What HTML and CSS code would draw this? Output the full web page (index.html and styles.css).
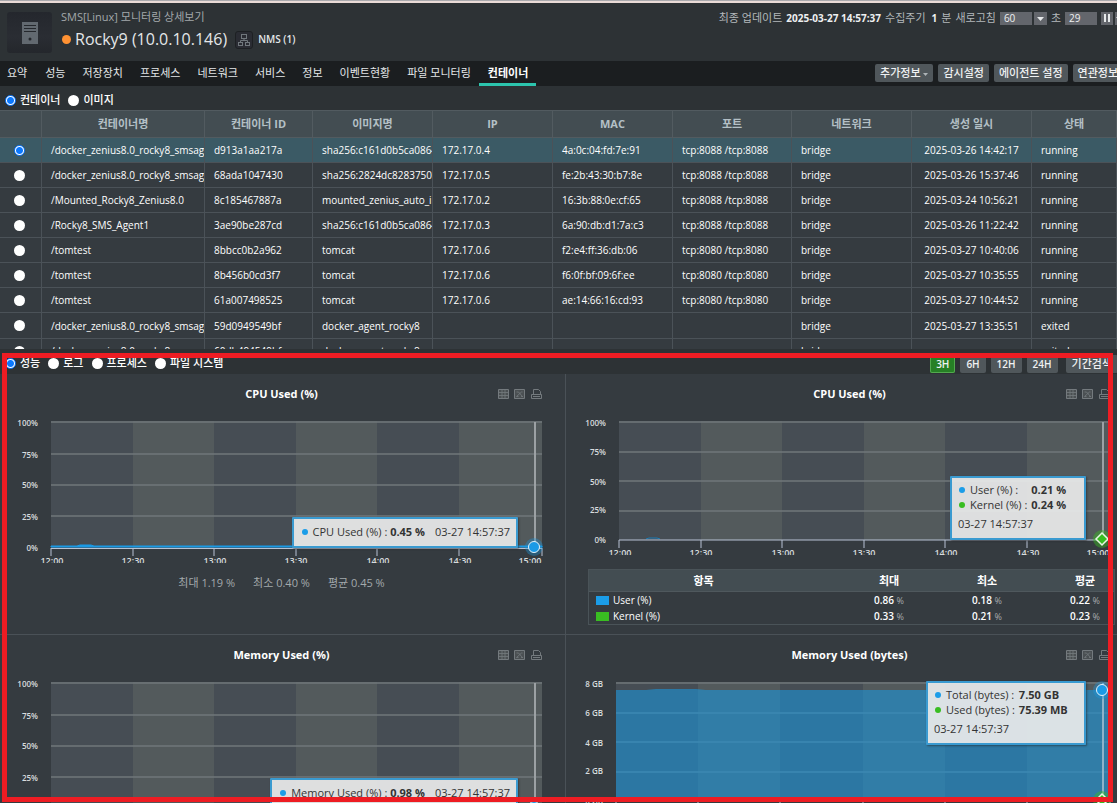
FILE: index.html
```html
<!DOCTYPE html>
<html lang="ko">
<head>
<meta charset="utf-8">
<title>SMS 모니터링 상세보기</title>
<link rel="stylesheet" href="styles.css">
</head>
<body>
<header class="top">
  <div class="device" aria-hidden="true">
    <svg width="18" height="24" viewBox="0 0 18 24"><rect x="1" y="1" width="16" height="22" fill="#626970"/><path d="M3 4.500h12M3 7.500h12M3 10.500h12" stroke="#25282d" stroke-width="1"/><circle cx="9" cy="18" r="1.500" fill="#25282d"/></svg>
  </div>
  <div class="ident">
    <p class="crumb">SMS[Linux] 모니터링 상세보기</p>
    <div class="host">
      <span class="status"></span>
      <h1>Rocky9 (10.0.10.146)</h1>
      <span class="nms-icon" aria-hidden="true"><svg width="12" height="12" viewBox="0 0 12 12" fill="none" stroke="#70777c"><rect x="3.500" y=".5" width="5" height="4"/><rect x=".5" y="8.500" width="4" height="3"/><rect x="7.500" y="8.500" width="4" height="3"/><path d="M6 4.500v2M2.500 8V6.500h7V8"/></svg></span>
      <a class="nms" href="#nms">NMS (1)</a>
    </div>
  </div>
  <div class="refresh">
    <span>최종 업데이트</span><b>2025-03-27 14:57:37</b><span>수집주기</span><b class="cycle">1</b><span>분</span>
    <label for="cycle">새로고침</label>
    <span class="select"><select id="cycle"><option>60</option></select><svg width="7" height="4" viewBox="0 0 7 4"><path d="M0 0h7L3.500 4z" fill="#e6e9ea"/></svg></span>
    <label for="left">초</label><input id="left" type="text" value="29">
    <button class="mini" aria-label="일시정지"><svg width="8" height="8" viewBox="0 0 8 8"><path d="M1 0h2v8H1zM5 0h2v8H5z" fill="#e6e9ea"/></svg></button>
    <button class="mini" aria-label="새로고침"><svg width="10" height="8" viewBox="0 0 10 8"><path d="M9 2A4 4 0 0 0 2 3H0l3 4 3-4H4a2 2 0 0 1 4 0z" fill="#e6e9ea"/></svg></button>
  </div>
</header>
<nav class="nav">
  <div class="tabs"><a href="#1">요약</a><a href="#2">성능</a><a href="#3">저장장치</a><a href="#4">프로세스</a><a href="#5">네트워크</a><a href="#6">서비스</a><a href="#7">정보</a><a href="#8">이벤트현황</a><a href="#9">파일 모니터링</a><a class="active" href="#10">컨테이너</a></div>
  <div class="actions"><button>추가정보 <svg width="5" height="3" viewBox="0 0 5 3"><path d="M0 0h5L2.500 3z" fill="#aeb4b7"/></svg></button><button>감시설정</button><button>에이전트 설정</button><button>연관정보</button></div>
</nav>
<div class="radios">
  <label><input type="radio" name="kind" checked>컨테이너</label>
  <label><input type="radio" name="kind">이미지</label>
</div>
<div class="list">
<table>
  <colgroup><col class="c-pick"><col class="c-name"><col class="c-id"><col class="c"><col class="c"><col class="c"><col class="c-port"><col class="c"><col class="c"><col></colgroup>
  <thead><tr><th></th><th>컨테이너명</th><th>컨테이너 ID</th><th>이미지명</th><th>IP</th><th>MAC</th><th>포트</th><th>네트워크</th><th>생성 일시</th><th>상태</th></tr></thead>
  <tbody>
  <tr class="on"><td><input type="radio" name="row" aria-label="선택" checked></td><td>/docker_zenius8.0_rocky8_smsagen</td><td>d913a1aa217a</td><td>sha256:c161d0b5ca0864</td><td>172.17.0.4</td><td>4a:0c:04:fd:7e:91</td><td>tcp:8088 /tcp:8088</td><td>bridge</td><td class="date">2025-03-26 14:42:17</td><td>running</td></tr>
  <tr><td><input type="radio" name="row" aria-label="선택"></td><td>/docker_zenius8.0_rocky8_smsagen</td><td>68ada1047430</td><td>sha256:2824dc82837506</td><td>172.17.0.5</td><td>fe:2b:43:30:b7:8e</td><td>tcp:8088 /tcp:8088</td><td>bridge</td><td class="date">2025-03-26 15:37:46</td><td>running</td></tr>
  <tr><td><input type="radio" name="row" aria-label="선택"></td><td>/Mounted_Rocky8_Zenius8.0</td><td>8c185467887a</td><td>mounted_zenius_auto_in</td><td>172.17.0.2</td><td>16:3b:88:0e:cf:65</td><td>tcp:8088 /tcp:8088</td><td>bridge</td><td class="date">2025-03-24 10:56:21</td><td>running</td></tr>
  <tr><td><input type="radio" name="row" aria-label="선택"></td><td>/Rocky8_SMS_Agent1</td><td>3ae90be287cd</td><td>sha256:c161d0b5ca0864</td><td>172.17.0.3</td><td>6a:90:db:d1:7a:c3</td><td>tcp:8088 /tcp:8088</td><td>bridge</td><td class="date">2025-03-26 11:22:42</td><td>running</td></tr>
  <tr><td><input type="radio" name="row" aria-label="선택"></td><td>/tomtest</td><td>8bbcc0b2a962</td><td>tomcat</td><td>172.17.0.6</td><td>f2:e4:ff:36:db:06</td><td>tcp:8080 /tcp:8080</td><td>bridge</td><td class="date">2025-03-27 10:40:06</td><td>running</td></tr>
  <tr><td><input type="radio" name="row" aria-label="선택"></td><td>/tomtest</td><td>8b456b0cd3f7</td><td>tomcat</td><td>172.17.0.6</td><td>f6:0f:bf:09:6f:ee</td><td>tcp:8080 /tcp:8080</td><td>bridge</td><td class="date">2025-03-27 10:35:55</td><td>running</td></tr>
  <tr><td><input type="radio" name="row" aria-label="선택"></td><td>/tomtest</td><td>61a007498525</td><td>tomcat</td><td>172.17.0.6</td><td>ae:14:66:16:cd:93</td><td>tcp:8080 /tcp:8080</td><td>bridge</td><td class="date">2025-03-27 10:44:52</td><td>running</td></tr>
  <tr><td><input type="radio" name="row" aria-label="선택"></td><td>/docker_zenius8.0_rocky8_smsagen</td><td>59d0949549bf</td><td>docker_agent_rocky8</td><td></td><td></td><td></td><td>bridge</td><td class="date">2025-03-27 13:35:51</td><td>exited</td></tr>
  <tr><td><input type="radio" name="row" aria-label="선택"></td><td>/docker_zenius8.0_rocky8_smsagen</td><td>60db494549bf</td><td>docker_agent_rocky8</td><td></td><td></td><td></td><td>bridge</td><td></td><td>exited</td></tr>
  </tbody>
</table>
</div>
<div class="detail-bar">
  <div class="radios">
    <label><input type="radio" name="view" checked>성능</label><label><input type="radio" name="view">로그</label><label><input type="radio" name="view">프로세스</label><label><input type="radio" name="view">파일 시스템</label>
  </div>
  <div class="period"><button class="on">3H</button><button>6H</button><button>12H</button><button>24H</button><button class="range">기간검색</button></div>
</div>
<svg width="0" height="0" class="defs">
  <symbol id="tools" viewBox="0 0 46 11"><path d="M1 1h10v9H1zM17 1h10v9H17z" fill="#4b5053"/><g fill="none" stroke="#747a7e"><path d="M1.500 .5h10v9h-10zM17.500 .5h10v9h-10z"/><path d="M2 3.500h9M2 6.500h9M5 1v8M8 1v8M19.500 3h2l4 4.500M25.500 3h-1l-5 4.500h2M24 7.500h2" opacity=".8"/><path d="M36.500 5V.5h5l2 2V5M34.500 9.500v-4h10v4zM36 7.500h7"/></g></symbol>
</svg>
<main class="charts">
  <section class="panel">
    <h2>CPU Used (%)</h2><svg class="tools" width="46" height="11"><use href="#tools"/></svg>
    <svg class="plot" viewBox="-2 0 567 150">
      <rect x="51" y="7" width="491" height="127" fill="#464d54"/><path d="M133 7h81v127h-81zM296 7h81v127h-81zM459 7h83v127h-83z" fill="#535a5c"/>
      <path d="M51 8h491M51 40h491M51 71h491M51 102h491" stroke="#70777a" stroke-width="1.500"/>
      <path d="M51 133v-1h26l3-1h11l3 1h448v1z" stroke="#1b9ae6" fill="#1b9ae6"/>
      <path d="M51 134.500h491M51 134v8M133 134v8M214 134v8M296 134v8M377 134v8M459 134v8M542 134v8" stroke="#b8c2d4" fill="none"/>
      <path d="M535 8v125" stroke="#9ca1a4" stroke-width="2"/>
      <g class="y"><text x="38" y="12">100%</text><text x="38" y="44">75%</text><text x="38" y="74">50%</text><text x="38" y="106">25%</text><text x="38" y="137">0%</text></g>
      <svg x="0" y="134" width="566" height="15"><g class="x"><text x="52" y="16">12:00</text><text x="133" y="16">12:30</text><text x="215" y="16">13:00</text><text x="296" y="16">13:30</text><text x="378" y="16">14:00</text><text x="460" y="16">14:30</text><text x="530" y="16">15:00</text></g></svg>
      <circle cx="534" cy="133" r="9" fill="#1b9ae6" opacity=".35"/><circle cx="534" cy="133" r="5.500" fill="#1b9ae6" stroke="#e5f2fa"/>
    </svg>
    <p class="stats"><span>최대 1.19 %</span><span>최소 0.40 %</span><span>평균 0.45 %</span></p>
    <div class="tip tip-line"><i></i>CPU Used (%) : <b>0.45 %</b><time>03-27 14:57:37</time></div>
  </section>
  <section class="panel">
    <h2>CPU Used (%)</h2><svg class="tools" width="46" height="11"><use href="#tools"/></svg>
    <svg class="plot" viewBox="0 0 567 150">
      <rect x="53" y="7" width="491" height="119" fill="#464d54"/><path d="M135 7h81v119h-81zM298 7h81v119h-81zM461 7h83v119h-83z" fill="#535a5c"/>
      <path d="M53 8h491M53 38h491M53 67h491M53 97h491" stroke="#70777a" stroke-width="1.500"/>
      <path d="M80 125l3-1h8l3 1" stroke="#1b7db8" stroke-width="1" fill="none"/>
      <path d="M53 126h491M53 126v8M135 126v8M216 126v8M298 126v8M379 126v8M461 126v8M544 126v8" stroke="#b8c2d4" fill="none"/>
      <path d="M537 8v117" stroke="#9ca1a4" stroke-width="2"/>
      <g class="y"><text x="40" y="12">100%</text><text x="40" y="41">75%</text><text x="40" y="71">50%</text><text x="40" y="99">25%</text><text x="40" y="129">0%</text></g>
      <svg x="0" y="126" width="566" height="15"><g class="x"><text x="54" y="16">12:00</text><text x="135" y="16">12:30</text><text x="217" y="16">13:00</text><text x="298" y="16">13:30</text><text x="380" y="16">14:00</text><text x="462" y="16">14:30</text><text x="532" y="16">15:00</text></g></svg>
      <circle cx="536" cy="125" r="9" fill="#39bd22" opacity=".45"/><path d="M536 119l6 6-6 6-6-6z" fill="#39bd22" stroke="#e9f6e6" stroke-width="1.500"/>
    </svg>
    <table class="legend">
      <colgroup><col><col class="n"><col class="n"><col class="last"></colgroup>
      <thead><tr><th>항목</th><th>최대</th><th>최소</th><th>평균</th></tr></thead>
      <tbody><tr><td><i></i>User (%)</td><td>0.86 <small>%</small></td><td>0.18 <small>%</small></td><td>0.22 <small>%</small></td></tr>
      <tr><td><i class="green"></i>Kernel (%)</td><td>0.33 <small>%</small></td><td>0.21 <small>%</small></td><td>0.23 <small>%</small></td></tr></tbody>
    </table>
    <div class="tip tip-box tip-cpu"><dl><dt><i></i>User (%) :</dt><dd>0.21 %</dd><dt><i class="green"></i>Kernel (%) :</dt><dd>0.24 %</dd></dl><time>03-27 14:57:37</time></div>
  </section>
  <section class="panel">
    <h2>Memory Used (%)</h2><svg class="tools" width="46" height="11"><use href="#tools"/></svg>
    <svg class="plot" viewBox="-2 0 567 150">
      <rect x="51" y="7" width="491" height="127" fill="#464d54"/><path d="M133 7h81v127h-81zM296 7h81v127h-81zM459 7h83v127h-83z" fill="#535a5c"/>
      <path d="M51 8h491M51 40h491M51 71h491M51 102h491" stroke="#70777a" stroke-width="1.500"/>
      <path d="M51 132h491" stroke="#1b9ae6" stroke-width="2"/><path d="M535 8v125" stroke="#9ca1a4" stroke-width="2"/>
      <g class="y"><text x="38" y="12">100%</text><text x="38" y="44">75%</text><text x="38" y="74">50%</text><text x="38" y="106">25%</text><text x="38" y="137">0%</text></g>
      <circle cx="534" cy="132" r="5.500" fill="#1b9ae6" stroke="#e5f2fa"/>
    </svg>
    <div class="tip tip-line"><i></i>Memory Used (%) : <b>0.98 %</b><time>03-27 14:57:37</time></div>
  </section>
  <section class="panel">
    <h2>Memory Used (bytes)</h2><svg class="tools" width="46" height="11"><use href="#tools"/></svg>
    <svg class="plot" viewBox="0 0 567 150">
      <rect x="50" y="7" width="494" height="119" fill="#464d54"/><path d="M132 7h82v119h-82zM297 7h82v119h-82zM461 7h83v119h-83z" fill="#535a5c"/>
      <path d="M50 8h494M50 38h494M50 67h494M50 97h494" stroke="#70777a" stroke-width="1.500"/>
      <path d="M50 15h30l10-1h40l10 1h404v111H50z" fill="#1b94d8" opacity=".6"/>
      <path d="M50 126h494M50 126v8M132 126v8M214 126v8M297 126v8M379 126v8M461 126v8M544 126v8" stroke="#b8c2d4" fill="none"/>
      <path d="M537 8v117" stroke="#8db3ca" stroke-width="2"/>
      <g class="y"><text x="37" y="12">8 GB</text><text x="37" y="41">6 GB</text><text x="37" y="71">4 GB</text><text x="37" y="99">2 GB</text><text x="37" y="129">0 GB</text></g>
      <circle cx="536" cy="15" r="9" fill="#1b9ae6" opacity=".35"/><circle cx="536" cy="15" r="5.500" fill="#1b9ae6" stroke="#e5f2fa"/>
      <circle cx="536" cy="125" r="9" fill="#39bd22" opacity=".45"/><path d="M536 119l6 6-6 6-6-6z" fill="#39bd22" stroke="#e9f6e6" stroke-width="1.500"/>
    </svg>
    <div class="tip tip-box tip-mem"><dl><dt><i></i>Total (bytes) :</dt><dd>7.50 GB</dd><dt><i class="green"></i>Used (bytes) :</dt><dd>75.39 MB</dd></dl><time>03-27 14:57:37</time></div>
  </section>
</main>
<div class="frame"></div>
</body>
</html>
```
FILE: styles.css
```css
* { box-sizing: border-box; }
body {
  margin: 0;
  height: 100vh;
  overflow: hidden;
  position: relative;
  border-top: 1px solid #aaa9ad;
  background: #2d3235;
  color: #e4e7e9;
  font: 11px/14px "Open Sans", "Noto Sans CJK KR", sans-serif;
}
h1, h2, p, dl, dd { margin: 0; }
a { color: inherit; text-decoration: none; }
button, input, select { font: inherit; color: inherit; }
button { cursor: pointer; }
i { display: inline-block; }

.top { display: flex; height: 60px; padding: 7px 0 0 7px; border-top: 2px solid #eadbd7; }
.device { display: grid; place-items: center; width: 45px; height: 41px; margin-top: 2px; border-radius: 3px; background: linear-gradient(#24272d, #2a2d33 60%, #24272c); }
.ident { margin-left: 9px; }
.crumb { color: #a3a8ab; font-size: 11px; line-height: 14px; }
.host { display: flex; align-items: center; height: 30px; }
.status { width: 9px; height: 9px; margin: 0 4px 0 1px; border-radius: 50%; background: #ff9233; }
h1 { font-size: 16px; line-height: 24px; font-weight: 400; }
.nms-icon { display: grid; place-items: center; width: 18px; height: 18px; margin: 2px 5px 0 8px; border: 1px solid #1d2023; border-radius: 3px; background: #2a2c33; }
.nms { font-size: 10px; font-weight: 600; }
.refresh { display: flex; align-items: center; gap: 4px; height: 14px; margin: 1px -8px 0 auto; white-space: nowrap; color: #b3b8bb; }
.refresh b { font-size: 10px; color: #eef0f1; }
.refresh .cycle { margin-left: 2px; }
.select { position: relative; display: flex; }
.refresh select { appearance: none; width: 47px; height: 13px; padding: 0 4px; border: 0; border-radius: 0; background: linear-gradient(90deg, #63666c 32px, transparent 32px 34px, #63666c 34px); color: #eef0f1; font-size: 10px; line-height: 13px; }
.select svg { position: absolute; right: 3px; top: 5px; pointer-events: none; }
.refresh input { width: 32px; height: 13px; padding: 0 4px; border: 0; background: #63666c; color: #eef0f1; font-size: 10px; }
.mini { display: grid; place-items: center; width: 12px; height: 13px; margin-right: -2px; padding: 0; border: 0; background: #63666c; }

.nav { display: flex; justify-content: space-between; height: 25px; background: #1b1e20; white-space: nowrap; }
.tabs { display: flex; }
.tabs a { padding: 5px 8px 0 9px; height: 25px; }
.tabs a:first-child { padding: 5px 9px 0 7px; }
.tabs .active { border-bottom: 3px solid #2cc5ae; color: #fff; font-weight: 700; }
.actions { display: flex; gap: 5px; margin: 3px -6px 0 0; }
.actions button, .period button { height: 18px; padding: 0 5px; border: 0; border-radius: 2px; background: #50575b; color: #f0f2f3; line-height: 16px; font-weight: 500; }
.actions svg { vertical-align: 1px; }

.radios { display: flex; align-items: center; gap: 8px; height: 24px; padding: 4px 0 0 5px; color: #fff; font-weight: 500; white-space: nowrap; }
.radios label { display: flex; align-items: center; gap: 4px; }
input[type="radio"] { appearance: none; flex: none; width: 11px; height: 11px; margin: 0; border-radius: 50%; background: #fff; }
input[type="radio"]:checked { border: 1px solid #0a78ff; background: radial-gradient(circle, #0a78ff 3px, #fff 4px); }

.list { height: 239px; overflow: hidden; }
.list table { width: 100%; border-collapse: separate; border-spacing: 0; table-layout: fixed; background: #353b40; }
.c-pick { width: 42px; }
.c-name { width: 163px; }
.c-id { width: 108px; }
.c { width: 120px; }
.c-port { width: 119px; }
.list th { height: 28px; padding: 0; border: solid #525b60; border-width: 1px 1px 1px 0; background: #434d52; color: #b4c0c6; font-size: 11px; line-height: 14px; font-weight: 700; }
.list td { height: 25px; padding: 0 0 0 9px; overflow: hidden; border: solid #4b5258; border-width: 0 1px 1px 0; color: #fff; font-size: 10px; line-height: 14px; font-weight: 400; white-space: nowrap; }
.list tr:nth-child(8) td { height: 26px; }
.list td:first-child { padding: 0 3px 0 0; text-align: center; line-height: 0; }
.list td.date { padding: 0; text-align: center; }
.list .on td { background: #3b5a65; }

.detail-bar { display: flex; justify-content: space-between; height: 25px; }
.period { display: flex; gap: 5px; margin: 6px -1px 0 0; }
.period button { font-size: 10px; font-weight: 600; padding: 0 6px; line-height: 16px; }
.period .on { background: #268025; box-shadow: inset 0 0 0 1px #53a94f; }
.period .range { margin-left: 3px; font-size: 11px; font-weight: 500; }

.defs { position: absolute; }
.charts { display: grid; grid-template-columns: 1fr 1fr; width: calc(100% + 19px); margin-left: -2px; background: #353b40; }
.panel { position: relative; height: 261px; padding-top: 12px; border: solid #4a5157; border-width: 0 1px 1px 0; }
h2 { text-align: center; color: #fff; font-size: 11px; line-height: 16px; font-weight: 700; }
.tools { position: absolute; top: 15px; right: 22px; }
.plot { display: block; width: 100%; margin-top: 12px; }
.plot text { fill: #d8dcde; font-size: 8px; font-weight: 600; }
.y text { text-anchor: end; }
.x text { text-anchor: middle; font-size: 9px; }
.stats { display: flex; justify-content: center; gap: 18px; margin-top: 12px; color: #a3a9ac; }

.tip { position: absolute; border: 2px solid #3a9ad0; border-radius: 1px; background: rgba(232, 233, 234, .93); color: #333; box-shadow: 1px 1px 2px #2228; white-space: nowrap; font-size: 11px; }
.tip i { width: 6px; height: 6px; margin-right: 5px; border-radius: 50%; background: #1b9de8; vertical-align: 1px; }
.tip i.green, .legend i.green { background: #39bd22; }
.tip-line { top: 143px; right: 47px; height: 31px; padding: 6px 6px 0 8px; }
.tip-line time { margin-left: 10px; }
.tip-box { padding: 4px 0 0 6px; line-height: 15px; height: 64px; }
.tip dl { display: grid; grid-template-columns: max-content auto; column-gap: 4px; padding-left: 1px; margin-bottom: 4px; }
.tip dd { font-weight: 700; }
.tip-cpu { top: 102px; right: 47px; width: 136px; }
.tip-mem { top: 46px; right: 47px; width: 160px; }

.legend { width: calc(100% - 40px); margin: 5px 0 0 22px; border: 1px solid #4a5358; border-spacing: 0; table-layout: fixed; color: #fff; font-size: 10px; font-weight: 600; }
.legend .n { width: 98px; }
.legend .last { width: 78px; }
.legend th { height: 22px; padding: 0; border-bottom: 1px solid #4f585d; background: #434d52; font-size: 11px; }
.legend th:first-child { padding-right: 22px; }
.legend th:last-child, .legend td:last-child { padding-left: 20px; }
.legend td { height: 16px; padding: 0; text-align: center; }
.legend td:first-child { text-align: left; padding-left: 7px; font-weight: 500; }
.legend i { width: 13px; height: 9px; margin-right: 4px; background: #1b9de8; vertical-align: -1px; }
.legend small { color: #a5abae; font-size: 9px; font-weight: 400; }

.frame { position: absolute; inset: 352px 4px 1px 2px; border: 5px solid #ee1c23; pointer-events: none; }
```
